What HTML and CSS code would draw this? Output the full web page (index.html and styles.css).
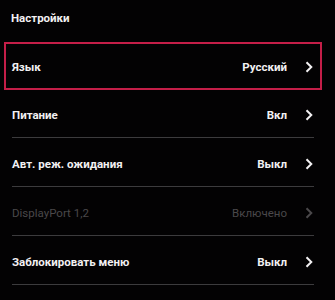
FILE: index.html
```html
<!DOCTYPE html>
<html lang="ru">
<head>
<meta charset="utf-8">
<link rel="stylesheet" href="styles.css">
</head>
<body>
<div class="screen">
  <div class="title">Настройки</div>
  <div class="list">
    <div class="item focused">
      <div class="inner">
        <span class="label">Язык</span>
        <span class="value">Русский</span>
        <svg class="chev" viewBox="0 0 8 12"><path d="M1.5 1.2 L6.3 6 L1.5 10.8"/></svg>
      </div>
    </div>
    <div class="item">
      <div class="inner">
        <span class="label">Питание</span>
        <span class="value">Вкл</span>
        <svg class="chev" viewBox="0 0 8 12"><path d="M1.5 1.2 L6.3 6 L1.5 10.8"/></svg>
      </div>
    </div>
    <div class="item">
      <div class="inner">
        <span class="label">Авт. реж. ожидания</span>
        <span class="value">Выкл</span>
        <svg class="chev" viewBox="0 0 8 12"><path d="M1.5 1.2 L6.3 6 L1.5 10.8"/></svg>
      </div>
    </div>
    <div class="item disabled">
      <div class="inner">
        <span class="label">DisplayPort 1,2</span>
        <span class="value">Включено</span>
        <svg class="chev" viewBox="0 0 8 12"><path d="M1.5 1.2 L6.3 6 L1.5 10.8"/></svg>
      </div>
    </div>
    <div class="item">
      <div class="inner">
        <span class="label">Заблокировать меню</span>
        <span class="value">Выкл</span>
        <svg class="chev" viewBox="0 0 8 12"><path d="M1.5 1.2 L6.3 6 L1.5 10.8"/></svg>
      </div>
    </div>
  </div>
</div>
</body>
</html>
```
FILE: styles.css
```css
* { box-sizing: border-box; }
html, body { margin: 0; padding: 0; background: #030203; }
body {
  width: 335px;
  height: 300px;
  overflow: hidden;
  font-family: Roboto, "Liberation Sans", sans-serif;
  color: #f2f0f2;
}
.screen { padding: 0 4px; }
.title {
  height: 42px;
  padding: 12px 0 0 7px;
  font-size: 11.5px;
  font-weight: 700;
  line-height: 13px;
}
.list { width: 318px; }
.item {
  height: 49px;
  padding: 0 8px;
}
.inner {
  height: 48px;
  border-bottom: 1px solid #3c3b3d;
  display: flex;
  align-items: center;
  padding-top: 3px;
  font-size: 11.5px;
  font-weight: 700;
}
.label { flex: 1; }
.value { margin-right: 18px; }
.chev {
  width: 8px;
  height: 12px;
  margin-right: 1px;
  fill: none;
  stroke: #f2f0f2;
  stroke-width: 2;
}
.item.focused {
  height: 48px;
  border: 2px solid #c41e48;
  padding: 0 6px;
}
.item.focused .inner {
  height: 44px;
  border-bottom: none;
  padding-top: 2px;
}
.item.disabled .inner { color: #4a484a; font-weight: 400; }
.item.disabled .chev { stroke: #4a484a; }
```
